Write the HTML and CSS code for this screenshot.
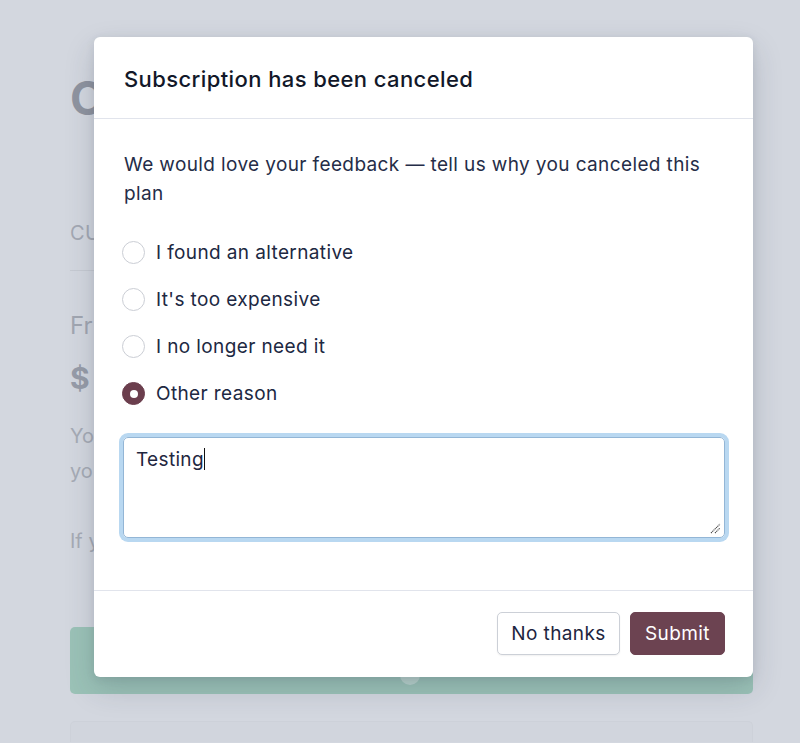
FILE: index.html
```html
<!DOCTYPE html>
<html>
<head>
<meta charset="utf-8">
<link rel="stylesheet" href="styles.css">
</head>
<body>
<div class="page">
  <div class="bg-title">C</div>
  <div class="bg-label">CU</div>
  <div class="bg-divider"></div>
  <div class="bg-plan">Fr</div>
  <div class="bg-price">$</div>
  <div class="bg-text">Yo<br>yo</div>
  <div class="bg-text bg-text2">If y</div>
  <div class="bg-green"><span class="bg-dot"></span></div>
  <div class="bg-card"></div>
</div>

<div class="modal">
  <div class="modal-header">
    <h2 class="modal-title">Subscription has been canceled</h2>
  </div>
  <div class="modal-body">
    <p class="intro">We would love your feedback — tell us why you canceled this plan</p>
    <div class="options">
      <label class="option"><span class="radio"></span><span>I found an alternative</span></label>
      <label class="option"><span class="radio"></span><span>It's too expensive</span></label>
      <label class="option"><span class="radio"></span><span>I no longer need it</span></label>
      <label class="option"><span class="radio checked"></span><span>Other reason</span></label>
    </div>
    <div class="textarea">Testing<span class="caret"></span>
      <svg class="grip" width="11" height="11" viewBox="0 0 11 11"><path d="M1 10 L10 1 M5 10 L10 5" stroke="#444" stroke-width="1.1" fill="none" stroke-dasharray="1.2 0.6"/></svg>
    </div>
  </div>
  <div class="modal-footer">
    <button class="btn btn-secondary">No thanks</button>
    <button class="btn btn-primary">Submit</button>
  </div>
</div>
</body>
</html>
```

FILE: styles.css
```css
* { box-sizing: border-box; }
html, body { margin: 0; padding: 0; }
body {
  background: #d3d7df;
  font-family: Inter, "Noto Sans", "Liberation Sans", sans-serif;
  width: 800px;
  height: 743px;
  overflow: hidden;
  position: relative;
}
.page {
  height: 743px;
  overflow: hidden;
  padding: 72px 47px 0 70px;
  color: #a1a6b1;
}
.bg-title {
  font-size: 46px;
  font-weight: 700;
  color: #8f94a0;
  line-height: 52px;
}
.bg-label {
  margin-top: 89px;
  font-size: 20px;
  letter-spacing: 0.5px;
  line-height: 40px;
  color: #a3a8b3;
}
.bg-divider {
  margin-top: 17px;
  height: 1px;
  background: #c6cad2;
}
.bg-plan {
  margin-top: 37px;
  font-size: 24px;
  line-height: 36px;
  color: #a1a6b1;
}
.bg-price {
  margin-top: 14px;
  font-size: 30px;
  font-weight: 700;
  line-height: 40px;
  color: #979ca8;
}
.bg-text {
  margin-top: 21px;
  font-size: 20px;
  line-height: 35px;
  color: #a6abb5;
}
.bg-text2 { margin-top: 35px; }
.bg-green {
  margin-top: 68px;
  height: 67px;
  border-radius: 5px;
  background: #9bc2b7;
  position: relative;
}
.bg-dot {
  position: absolute;
  left: 330px;
  top: 38px;
  width: 20px;
  height: 20px;
  border-radius: 50%;
  background: #b9d3cc;
}
.bg-card {
  margin-top: 27px;
  height: 21px;
  border: 1px solid #cdd1d9;
  border-bottom: 0;
  border-radius: 5px 5px 0 0;
  background: #d1d5dd;
}

.modal {
  position: absolute;
  left: 94px;
  top: 37px;
  width: 659px;
  height: 640px;
  background: #fff;
  border-radius: 6px;
  box-shadow: 0 12px 30px rgba(40, 50, 70, 0.18), 0 2px 8px rgba(40, 50, 70, 0.1);
  display: flex;
  flex-direction: column;
  color: #262f4a;
}
.modal-header {
  height: 82px;
  border-bottom: 1px solid #e1e4ec;
  display: flex;
  align-items: center;
  padding: 0 30px;
}
.modal-title {
  margin: 0;
  font-size: 22px;
  font-weight: 500;
  color: #121829;
  letter-spacing: 0.4px;
  position: relative;
  top: 1px;
}
.modal-body {
  flex: 1;
  padding: 31px 30px 0;
}
.intro {
  margin: 0;
  font-size: 19px;
  line-height: 29px;
  letter-spacing: 0.38px;
  color: #252d48;
}
.options {
  margin-top: 30px;
  display: flex;
  flex-direction: column;
  gap: 18px;
}
.option {
  display: flex;
  align-items: center;
  gap: 11px;
  font-size: 19px;
  line-height: 29px;
  letter-spacing: 0.38px;
  color: #202842;
}
.radio {
  width: 23px;
  height: 23px;
  border-radius: 50%;
  border: 1px solid #cbced5;
  background: #fff;
  flex: none;
  margin-left: -2px;
  position: relative;
}
.radio.checked {
  background: #6b3e4d;
  border-color: #6b3e4d;
}
.radio.checked::after {
  content: "";
  position: absolute;
  left: 50%;
  top: 50%;
  width: 8px;
  height: 8px;
  margin: -4px 0 0 -4px;
  border-radius: 50%;
  background: #fff;
}
.textarea {
  margin: 29px -2px 0 -1px;
  height: 101px;
  border: 1px solid #93b6d6;
  border-radius: 5px;
  box-shadow: 0 0 0 4px #b9d8f1;
  padding: 9px 12px;
  font-size: 19px;
  line-height: 26px;
  letter-spacing: 0.33px;
  color: #1f2740;
  position: relative;
}
.caret {
  display: inline-block;
  width: 1px;
  height: 22px;
  background: #111;
  vertical-align: -4px;
}
.grip {
  position: absolute;
  right: 3px;
  bottom: 3px;
}
.modal-footer {
  height: 87px;
  border-top: 1px solid #e1e4ec;
  display: flex;
  align-items: center;
  justify-content: flex-end;
  gap: 10px;
  padding: 0 28px 1px;
}
.btn {
  height: 43px;
  font-family: inherit;
  font-size: 19px;
  letter-spacing: 0.4px;
  border-radius: 5px;
  padding: 0;
  cursor: pointer;
}
.btn-secondary {
  background: #fff;
  color: #1d2540;
  border: 1px solid #ccd0d7;
  box-shadow: 0 1px 2px rgba(0,0,0,0.06);
  width: 123px;
}
.btn-primary {
  background: #6c4351;
  color: #fff;
  border: 1px solid #6c4351;
  width: 95px;
}
```
